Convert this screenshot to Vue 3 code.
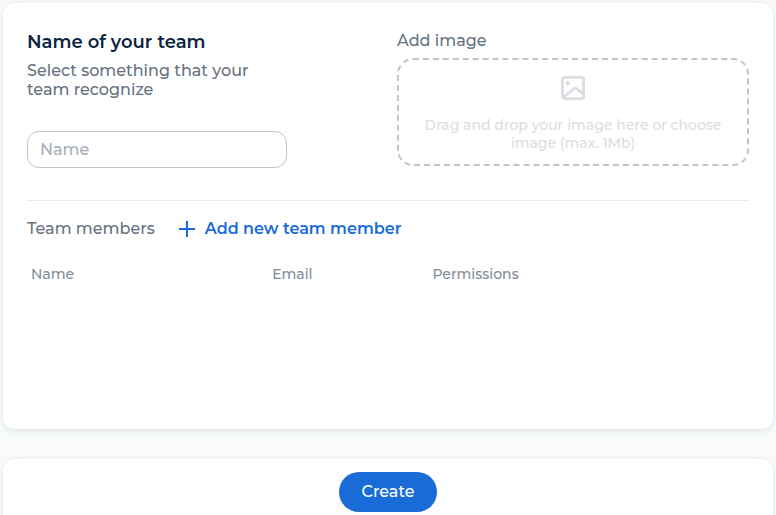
<script setup>
import { ref } from 'vue'

const teamName = ref('')
const columns = ['Name', 'Email', 'Permissions']
</script>

<template>
  <main class="page">
    <form id="team-form" class="card details" @submit.prevent>
      <div class="top">
        <section class="naming">
          <label class="title" for="team-name">Name of your team</label>
          <p class="hint">Select something that your<br />team recognize</p>
          <input id="team-name" v-model="teamName" class="field" type="text" placeholder="Name" />
        </section>
        <section class="upload">
          <h2 class="label">Add image</h2>
          <button class="drop" type="button">
            <svg class="picture" viewBox="0 0 26 26" aria-hidden="true">
              <rect x="2.4" y="2.4" width="21.2" height="21.2" rx="2.4" />
              <path d="M3 22.5 L14.6 13.4 Q15.5 12.8 16.4 13.4 L24 19.6" />
              <circle cx="7.8" cy="8.2" r="2.1" />
            </svg>
            <span>Drag and drop your image here or choose<br />image (max. 1Mb)</span>
          </button>
        </section>
      </div>
      <hr class="rule" />
      <div class="members">
        <h2 class="label">Team members</h2>
        <button class="add" type="button">
          <svg class="plus" viewBox="0 0 16 16" aria-hidden="true">
            <path d="M8 0V16M0 8H16" />
          </svg>
          <span>Add new team member</span>
        </button>
      </div>
      <table class="table">
        <thead>
          <tr>
            <th v-for="column in columns" :key="column" scope="col">{{ column }}</th>
          </tr>
        </thead>
      </table>
    </form>
    <footer class="card actions">
      <button class="create" type="submit" form="team-form">Create</button>
    </footer>
  </main>
</template>

<style>
body {
  background: #fafcfb;
}
</style>

<style scoped>
.page {
  box-sizing: border-box;
  display: flex;
  flex-direction: column;
  gap: 30px;
  height: 100vh;
  padding: 3px;
  overflow: auto;
  scrollbar-width: none;
  font-family: Montserrat, Inter, sans-serif;
  font-size: 16px;
  font-weight: 500;
  line-height: 19px;
  color: #66727f;
}
button,
input {
  box-sizing: border-box;
  margin: 0;
  font: inherit;
}
button {
  cursor: pointer;
}
.card {
  flex: none;
  box-sizing: border-box;
  border-radius: 12px;
  background: #fff;
  box-shadow: 0 2px 10px rgba(50, 90, 160, 0.14);
}
.details {
  min-height: 426px;
  padding: 28px 24px 24px;
}
.top {
  display: grid;
  grid-template-columns: minmax(0, 370fr) minmax(0, 352fr);
}
.naming {
  display: flex;
  flex-direction: column;
  align-items: flex-start;
}
.title {
  font-size: 18px;
  line-height: 22px;
  font-weight: 600;
  color: #0b2542;
}
.hint {
  margin: 8px 0 32px;
}
.field {
  width: 100%;
  max-width: 260px;
  height: 37px;
  padding: 0 12px;
  border: 1px solid #c0c4ce;
  border-radius: 12px;
  background: #fff;
  color: #0b2542;
}
.field::placeholder {
  color: #a6aeb9;
  opacity: 1;
}
.label {
  margin: 0;
  font-size: 16px;
  line-height: inherit;
  font-weight: 500;
}
.upload {
  display: flex;
  flex-direction: column;
  gap: 8px;
}
.drop {
  display: flex;
  flex-direction: column;
  align-items: center;
  gap: 15px;
  width: 100%;
  height: 108px;
  padding: 15px 12px 12px;
  border: 2px dashed #c0c4ce;
  border-radius: 16px;
  background: none;
  font-size: 14px;
  line-height: 18px;
  text-align: center;
  color: #dadee3;
}
.picture {
  flex: none;
  width: 26px;
  height: 26px;
  fill: none;
  stroke: #dadee3;
  stroke-width: 2.8;
  stroke-linejoin: round;
}
.picture circle {
  fill: #dadee3;
  stroke: none;
}
.rule {
  height: 1px;
  margin: 32px 0 19px;
  border: 0;
  background: #e9ebf0;
}
.members {
  display: flex;
  align-items: center;
  gap: 24px;
  line-height: 18px;
}
.add {
  display: flex;
  align-items: center;
  gap: 10px;
  padding: 0;
  border: 0;
  background: none;
  font-weight: 600;
  color: #196cd8;
}
.plus {
  width: 16px;
  height: 16px;
  fill: none;
  stroke: #196cd8;
  stroke-width: 2;
}
.table {
  width: 100%;
  margin-top: 26px;
  border-collapse: collapse;
  table-layout: fixed;
  font-size: 14px;
  line-height: 20px;
  color: #818d9b;
}
.table th {
  box-sizing: border-box;
  padding: 0 4px;
  font-weight: 500;
  text-align: left;
}
.table th:nth-child(1) {
  width: 33.4%;
}
.table th:nth-child(2) {
  width: 22.2%;
}
.actions {
  display: flex;
  justify-content: center;
  padding: 13px 24px;
}
.create {
  height: 40px;
  padding: 0 22px 2px;
  border: 0;
  border-radius: 20px;
  background: #196cd8;
  font-weight: 500;
  color: #fff;
}
</style>
